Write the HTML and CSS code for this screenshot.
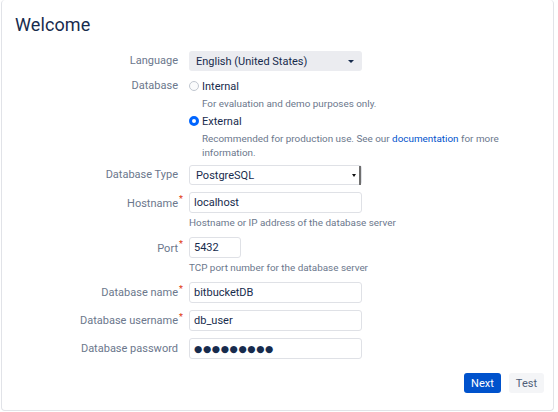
FILE: index.html
```html
<!DOCTYPE html>
<html lang="en">
<head>
<meta charset="utf-8">
<title>Welcome</title>
<link rel="stylesheet" href="styles.css">
</head>
<body>
<div class="card">
  <h1 class="title">Welcome</h1>
  <form class="form">
    <div class="row">
      <div class="label">Language</div>
      <div class="control">
        <div class="select-lang"><span>English (United States)</span><span class="caret"></span></div>
      </div>
    </div>
    <div class="row row-top row-db">
      <div class="label">Database</div>
      <div class="control">
        <div class="option">
          <div class="radio-line"><span class="radio"></span><span class="radio-text">Internal</span></div>
          <div class="desc">For evaluation and demo purposes only.</div>
        </div>
        <div class="option option-next">
          <div class="radio-line"><span class="radio radio-on"></span><span class="radio-text">External</span></div>
          <div class="desc desc-wide">Recommended for production use. See our <a class="link" href="#">documentation</a> for more information.</div>
        </div>
      </div>
    </div>
    <div class="row">
      <div class="label">Database Type</div>
      <div class="control">
        <div class="select-native"><span>PostgreSQL</span><span class="native-btn"><span class="native-caret"></span></span></div>
      </div>
    </div>
    <div class="row row-top">
      <div class="label label-field">Hostname<span class="req">*</span></div>
      <div class="control">
        <div class="field">localhost</div>
        <div class="desc">Hostname or IP address of the database server</div>
      </div>
    </div>
    <div class="row row-top">
      <div class="label label-field">Port<span class="req">*</span></div>
      <div class="control">
        <div class="field field-short">5432</div>
        <div class="desc">TCP port number for the database server</div>
      </div>
    </div>
    <div class="row">
      <div class="label">Database name<span class="req">*</span></div>
      <div class="control"><div class="field">bitbucketDB</div></div>
    </div>
    <div class="row">
      <div class="label">Database username<span class="req">*</span></div>
      <div class="control"><div class="field">db_user</div></div>
    </div>
    <div class="row">
      <div class="label">Database password</div>
      <div class="control"><div class="field field-pass">●●●●●●●●●</div></div>
    </div>
  </form>
  <div class="buttons">
    <button class="btn btn-primary" type="button">Next</button>
    <button class="btn btn-subtle" type="button">Test</button>
  </div>
</div>
</body>
</html>
```

FILE: styles.css
```css
* { box-sizing: border-box; }
html, body { margin: 0; padding: 0; background: #ffffff; }
body {
  font-family: Roboto, "Open Sans", sans-serif;
  color: #172b4d;
  width: 558px;
  height: 412px;
  overflow: hidden;
}
.card {
  margin: 0 4px 0 1px;
  height: 411px;
  border: 1px solid #e1e3e8;
  border-top: none;
  border-radius: 4px;
  padding: 11px 9px 0 13px;
  display: flex;
  flex-direction: column;
}
.title {
  margin: 0;
  font-size: 18px;
  font-weight: 400;
  line-height: 27px;
  color: #172b4d;
  letter-spacing: 0.1px;
}
.form {
  margin-top: 13px;
  display: flex;
  flex-direction: column;
  gap: 7px;
}
.row {
  display: flex;
  align-items: center;
  gap: 11px;
}
.row-top { align-items: flex-start; }
.row-db { padding-top: 1px; margin-bottom: -2px; }
.label {
  width: 163px;
  flex: none;
  text-align: right;
  font-size: 11px;
  color: #6b778c;
  position: relative;
  line-height: 14px;
}
.label-field { line-height: 21px; padding-top: 1px; }
.req {
  position: absolute;
  right: -5px;
  top: -4px;
  color: #de350b;
  font-size: 9px;
  line-height: 14px;
}
.label-field .req { top: 0; }
.control {
  display: flex;
  flex-direction: column;
}
.select-lang {
  width: 173px;
  height: 20px;
  background: #ebecf0;
  border-radius: 3px;
  display: flex;
  align-items: center;
  justify-content: space-between;
  padding: 0 8px 0 7px;
  font-size: 11px;
  color: #172b4d;
}
.caret {
  width: 0;
  height: 0;
  border-left: 3px solid transparent;
  border-right: 3px solid transparent;
  border-top: 3px solid #172b4d;
}
.option { display: flex; flex-direction: column; }
.option-next { margin-top: 3px; }
.radio-line {
  display: flex;
  align-items: center;
  height: 14px;
  gap: 3px;
}
.radio {
  width: 10px;
  height: 10px;
  border-radius: 50%;
  border: 1px solid #c1c7d0;
  background: #fafbfc;
  flex: none;
}
.radio-on {
  border: 3px solid #0065ff;
  background: #ffffff;
}
.radio-text { font-size: 11px; color: #172b4d; }
.desc {
  margin-top: 3px;
  padding-left: 13px;
  font-size: 9.9px;
  line-height: 14px;
  color: #6b778c;
}
.option .desc { margin-top: 4px; }
.control > .desc { padding-left: 0; }
.desc-wide { width: 312px; }
.link { color: #0052cc; text-decoration: none; }
.select-native {
  width: 173px;
  height: 20px;
  border: 1px solid #dfe1e6;
  border-radius: 3px;
  background: #ffffff;
  display: flex;
  align-items: center;
  justify-content: space-between;
  padding-left: 6px;
  font-size: 11px;
  color: #172b4d;
}
.native-btn {
  width: 9px;
  height: 19px;
  border-right: 2px solid #6f6f6f;
  display: flex;
  align-items: center;
  justify-content: flex-start;
}
.native-caret {
  width: 0;
  height: 0;
  border-left: 2.5px solid transparent;
  border-right: 2.5px solid transparent;
  border-top: 3px solid #111111;
}
.field {
  width: 173px;
  height: 21px;
  border: 1px solid #dfe1e6;
  border-radius: 3px;
  background: #ffffff;
  padding-left: 4px;
  display: flex;
  align-items: center;
  font-size: 11px;
  color: #172b4d;
}
.field-short { width: 52px; }
.field-pass {
  font-family: "DejaVu Sans", sans-serif;
  font-size: 9.5px;
  letter-spacing: 0.6px;
}
.buttons {
  margin-top: auto;
  margin-bottom: 17px;
  display: flex;
  justify-content: flex-end;
  gap: 8px;
}
.btn {
  height: 20px;
  border: none;
  border-radius: 3px;
  font-family: Roboto, "Open Sans", sans-serif;
  font-size: 11px;
  padding: 0 7px;
}
.btn-primary { background: #0052cc; color: #ffffff; }
.btn-subtle { background: #f4f5f7; color: #505f79; }
```
